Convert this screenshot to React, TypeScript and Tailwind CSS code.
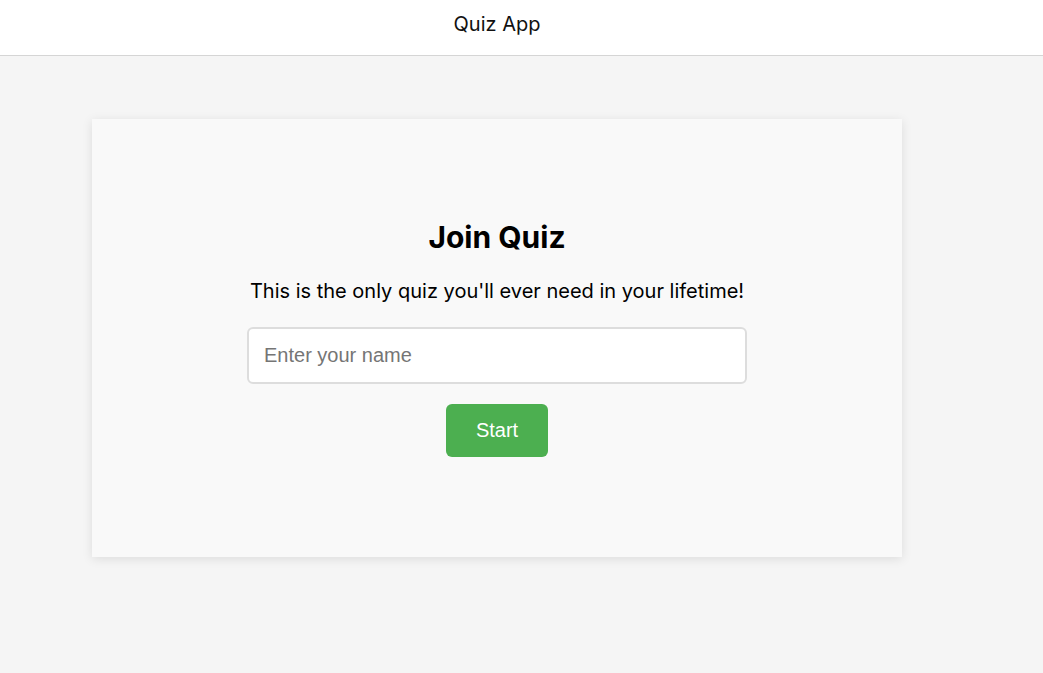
export default function App() {
  return (
    <div className="flex min-h-screen flex-col bg-[#f5f5f5] font-['Inter',sans-serif] text-xl leading-6 text-black">
      <header className="border-b border-[#d5d5d5] bg-white pr-[49px] pt-3 pb-[19px] text-center text-[#111111]">Quiz App</header>
      <main className="pt-[63px] pr-[141px] pl-[92px]">
        <section className="flex flex-col items-center bg-[#f9f9f9] px-4 pt-[100px] pb-[100px] shadow-[0_2px_10px_rgba(0,0,0,0.1)]">
          <h1 className="text-[30px] leading-9 font-bold">Join Quiz</h1>
          <p className="mt-6 text-center">This is the only quiz you'll ever need in your lifetime!</p>
          <form className="mt-6 flex w-full flex-col items-center gap-5" onSubmit={(e) => e.preventDefault()}>
            <input
              type="text"
              aria-label="Enter your name"
              placeholder="Enter your name"
              className="h-[57px] w-full max-w-[500px] rounded-md border-2 border-[#dddddd] bg-white px-[15px] font-['Liberation_Sans',sans-serif] placeholder:text-[#757575]"
            />
            <button type="submit" className="rounded-md bg-[#4caf50] px-[30px] pt-[14px] pb-[15px] font-['Liberation_Sans',sans-serif] text-white">
              Start
            </button>
          </form>
        </section>
      </main>
    </div>
  );
}
